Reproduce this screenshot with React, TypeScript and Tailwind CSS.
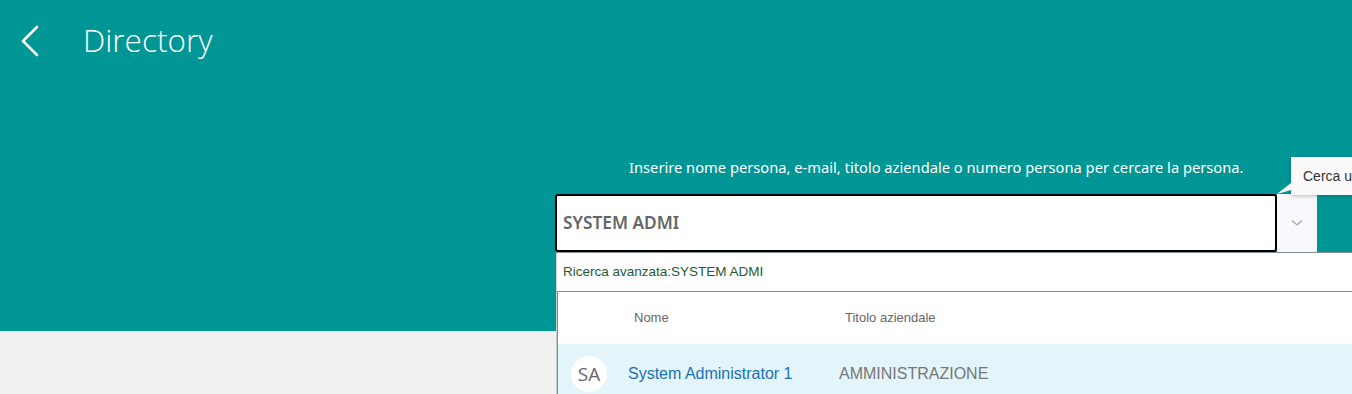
import React from "react";

export default function App() {
  return (
    <div className="relative w-[1352px] h-[394px] overflow-hidden bg-[#f0f0f0]" style={{ fontFamily: '"Liberation Sans", Arial, sans-serif' }}>
      <div className="h-[331px] bg-[#009695]">
        <div className="flex items-center h-[82px] pl-[20px]">
          <svg width="22" height="32" viewBox="0 0 22 32" className="shrink-0">
            <path d="M17 2 L3 16 L17 30" fill="none" stroke="white" strokeWidth="2.6" strokeLinecap="round" strokeLinejoin="round" />
          </svg>
          <span className="ml-[41px] text-white text-[31.5px] font-light leading-none -mt-[2px]" style={{ fontFamily: '"Open Sans", "Noto Sans", sans-serif' }}>
            Directory
          </span>
        </div>
        <div className="ml-[555px] w-[762px] mt-[75px]">
          <div className="text-white text-[14.7px] pl-[74px] leading-[20px] whitespace-nowrap" style={{ fontFamily: '"Noto Sans", "Open Sans", sans-serif' }}>
            Inserire nome persona, e-mail, titolo aziendale o numero persona per cercare la persona.
          </div>
          <div className="flex mt-[17px] h-[58px]">
            <div className="flex-1 bg-white border-2 border-black rounded-[3px] flex items-center pl-[6px]">
              <span className="text-[17.3px] font-semibold text-[#666]" style={{ fontFamily: '"Noto Sans", "Open Sans", sans-serif' }}>SYSTEM ADMI</span>
            </div>
            <div className="w-[40px] bg-[#f7f9fc] flex items-center justify-center">
              <svg width="12" height="8" viewBox="0 0 12 8">
                <path d="M1 1.5 L6 6 L11 1.5" fill="none" stroke="#a0a8b0" strokeWidth="1.3" />
              </svg>
            </div>
          </div>
        </div>
      </div>

      {/* tooltip */}
      <div className="absolute left-[1291px] top-[157px] w-[140px] h-[38px] bg-[#fafafa] shadow-[0_1px_4px_rgba(0,0,0,0.25)] flex items-center pl-[12px] text-[14px] text-[#333] whitespace-nowrap overflow-hidden">
        Cerca una persona
      </div>
      <svg className="absolute left-[1274px] top-[182px]" width="20" height="14" viewBox="0 0 20 14">
        <path d="M3 12 L17 1 L17 8 Z" fill="#fafafa" />
      </svg>

      {/* dropdown panel */}
      <div className="absolute left-[556px] top-[252px] right-0 bottom-0 bg-white border-t border-[#7d8c96] border-l border-l-[#c8cdd0]">
        <div className="h-[38px] flex items-center pl-[6px] text-[13.5px] text-[#1d5a37]">
          Ricerca avanzata:SYSTEM ADMI
        </div>
        <div className="border-t border-l border-[#7d8c96] h-full">
          <div className="h-[52px] flex items-center text-[13px] text-[#666]">
            <div className="w-[76px]" />
            <div className="w-[211px]">Nome</div>
            <div>Titolo aziendale</div>
          </div>
          <div className="h-[60px] bg-[#e3f5fa] flex items-center">
            <div className="w-[70px] pl-[13px]">
              <div className="w-[36px] h-[36px] rounded-full bg-white flex items-center justify-center text-[19px] text-[#666]" style={{ fontFamily: '"Open Sans", "Noto Sans", sans-serif' }}>
                SA
              </div>
            </div>
            <div className="w-[211px] text-[16px] text-[#1a6fb3]">System Administrator 1</div>
            <div className="text-[16px] text-[#777]">AMMINISTRAZIONE</div>
          </div>
        </div>
      </div>
    </div>
  );
}
